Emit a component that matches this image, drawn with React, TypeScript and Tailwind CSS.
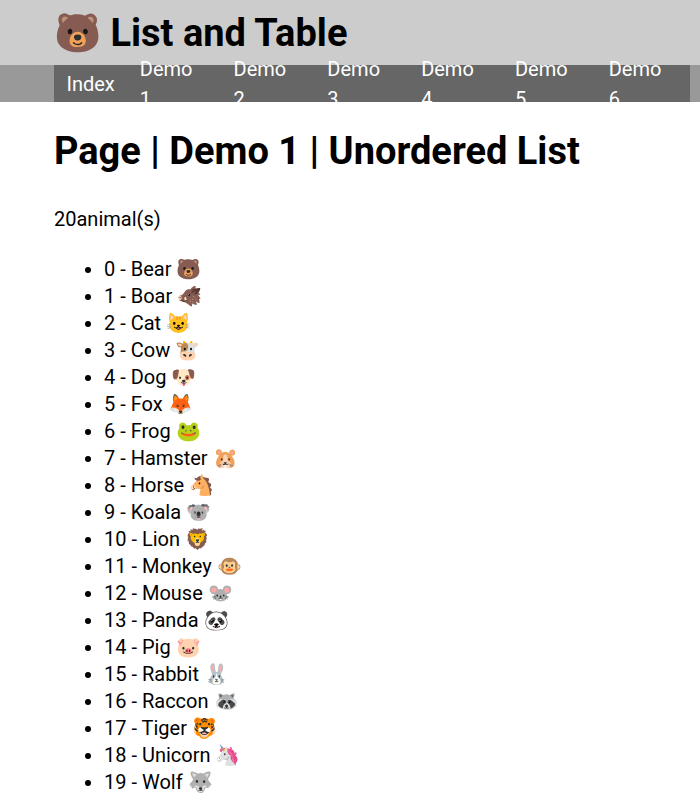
const navItems = ['Index', 'Demo 1', 'Demo 2', 'Demo 3', 'Demo 4', 'Demo 5', 'Demo 6'];

const animals = [
  ['Bear', '🐻'],
  ['Boar', '🐗'],
  ['Cat', '😺'],
  ['Cow', '🐮'],
  ['Dog', '🐶'],
  ['Fox', '🦊'],
  ['Frog', '🐸'],
  ['Hamster', '🐹'],
  ['Horse', '🐴'],
  ['Koala', '🐨'],
  ['Lion', '🦁'],
  ['Monkey', '🐵'],
  ['Mouse', '🐭'],
  ['Panda', '🐼'],
  ['Pig', '🐷'],
  ['Rabbit', '🐰'],
  ['Raccon', '🦝'],
  ['Tiger', '🐯'],
  ['Unicorn', '🦄'],
  ['Wolf', '🐺'],
];

export default function App() {
  return (
    <div className="font-['Roboto',sans-serif] text-[20px] text-black">
      <header className="h-[65px] bg-[#cccccc] pl-[54px] flex items-center">
        <h1 className="text-[38px] font-bold leading-none">🐻 List and Table</h1>
      </header>
      <div className="h-[37px] bg-[#999999] pl-[54px] pr-[10px]">
        <nav className="h-full bg-[#666666] flex items-center text-white">
          {navItems.map((item) => (
            <a key={item} className="px-[12.5px]">{item}</a>
          ))}
        </nav>
      </div>
      <main className="pl-[54px] pr-[10px]">
        <h2 className="text-[38px] font-bold leading-none mt-[30px]">Page | Demo 1 | Unordered List</h2>
        <p className="mt-[34px]">20animal(s)</p>
        <ul className="list-disc pl-[50px] mt-[22px]">
          {animals.map(([name, emoji], i) => (
            <li key={name} className="h-[27px] leading-[27px]">{i} - {name} {emoji}</li>
          ))}
        </ul>
      </main>
    </div>
  );
}
